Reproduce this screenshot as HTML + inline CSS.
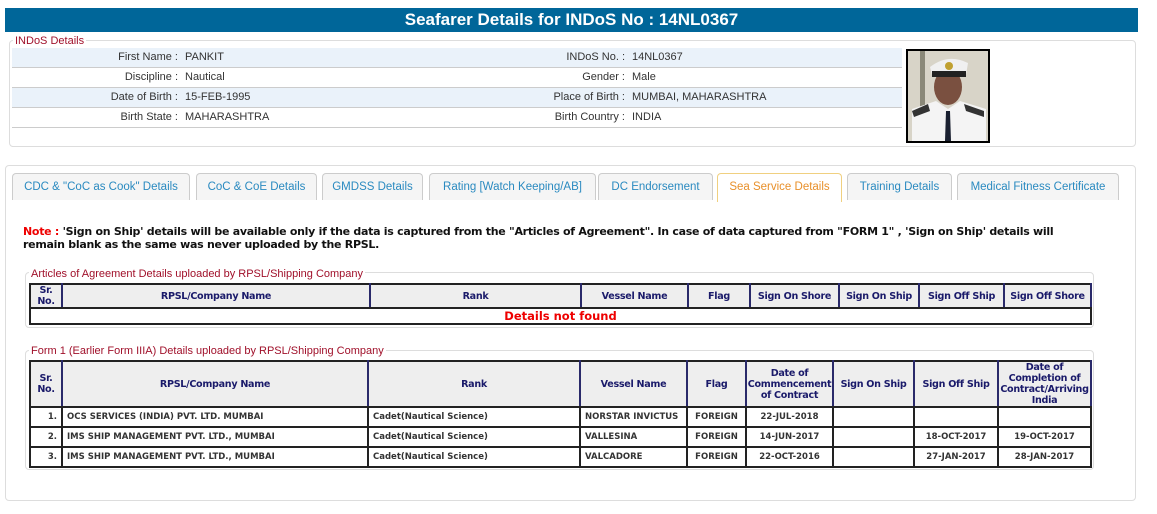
<!DOCTYPE html>
<html><head><meta charset="utf-8"><style>
*{margin:0;padding:0;box-sizing:border-box}
body{width:1157px;height:514px;background:#fff;position:relative;font-family:"Liberation Sans",Arial,sans-serif;overflow:hidden}
.a{position:absolute}
.hdr{left:5px;top:8px;width:1133px;height:24px;background:#006699;color:#fff;font-weight:bold;font-size:17px;text-align:center;line-height:24px}
.fs{border:1px solid #ddd;border-radius:4px}
.leg{background:#fff;color:#a0102a;font-size:11px;padding:0 2px;line-height:12px}
.row{left:12px;width:890px;height:20px;border-bottom:1px solid #ccc;font-size:11px;color:#333;line-height:19px}
.row.b{background:#eaf2fa}
.row span{position:absolute;white-space:nowrap}
.l1{right:724px;text-align:right}
.v1{left:173px}
.l2{right:277px;text-align:right}
.v2{left:620px}
.tab{top:173px;height:27px;border:1px solid #ccc;border-bottom:none;border-radius:4px 4px 0 0;background:#f5f5f5;color:#2a8ac0;font-size:11.5px;text-align:center;line-height:26px;white-space:nowrap}
.tab.on{background:#fff;color:#e8902a;border-color:#f0d080;height:29px}
.note{left:23px;top:225px;width:1060px;font-family:Verdana,"DejaVu Sans",sans-serif;font-weight:bold;font-size:11px;letter-spacing:-0.28px;line-height:13px;color:#111}
table{position:absolute;border-collapse:collapse;font-family:Verdana,"DejaVu Sans",sans-serif;font-weight:bold;table-layout:fixed}
th{background:#eee;color:#1a1a6a;font-size:9.6px;letter-spacing:-0.3px;border:2px solid #222;border-right-color:#2a2a6a;line-height:11px;text-align:center;padding:0;overflow:hidden}
td{font-size:8.5px;color:#333;border:2px solid #222;padding:0 4px;height:20px;white-space:nowrap;overflow:hidden}
td.c{text-align:center}
</style></head><body>
<div class="a hdr">Seafarer Details for INDoS No : 14NL0367</div>

<div class="a fs" style="left:9px;top:40px;width:1127px;height:107px"></div>
<div class="a leg" style="left:13px;top:35px">INDoS Details</div>
<div class="a row b" style="top:48px"><span class="l1">First Name :</span><span class="v1">PANKIT</span><span class="l2">INDoS No. :</span><span class="v2">14NL0367</span></div>
<div class="a row" style="top:68px"><span class="l1">Discipline :</span><span class="v1">Nautical</span><span class="l2">Gender :</span><span class="v2">Male</span></div>
<div class="a row b" style="top:88px"><span class="l1">Date of Birth :</span><span class="v1">15-FEB-1995</span><span class="l2">Place of Birth :</span><span class="v2">MUMBAI, MAHARASHTRA</span></div>
<div class="a row" style="top:108px"><span class="l1">Birth State :</span><span class="v1">MAHARASHTRA</span><span class="l2">Birth Country :</span><span class="v2">INDIA</span></div>
<div class="a" style="left:12px;top:128px;width:1120px;border-bottom:1px solid #ddd;height:19px"></div>
<svg class="a" style="left:906px;top:49px" width="84" height="94" viewBox="0 0 84 94">
<rect width="84" height="94" fill="#000"/>
<rect x="2" y="2" width="80" height="90" fill="#d8d4c8"/>
<rect x="14" y="2" width="5" height="60" fill="#8a8878"/>
<path d="M6 60 L30 52 L42 60 L54 52 L80 60 L80 92 L6 92Z" fill="#f4f4f4"/>
<path d="M6 62 L22 55 L24 62 L8 68Z M58 55 L78 62 L78 68 L60 62Z" fill="#333"/>
<path d="M40 62 L44 62 L45 92 L39 92Z" fill="#1a2030"/>
<ellipse cx="42" cy="38" rx="14" ry="18" fill="#7a5040"/>
<path d="M24 18 Q42 4 62 14 L60 26 L26 26Z" fill="#f0f0f0"/>
<path d="M26 22 L60 22 L60 28 L26 28Z" fill="#222"/>
<circle cx="43" cy="17" r="4" fill="#c0a030"/>
</svg>

<div class="a fs" style="left:5px;top:165px;width:1131px;height:336px"></div>
<div class="a tab" style="left:12px;width:178px">CDC &amp; "CoC as Cook" Details</div>
<div class="a tab" style="left:196px;width:121px">CoC &amp; CoE Details</div>
<div class="a tab" style="left:322px;width:101px">GMDSS Details</div>
<div class="a tab" style="left:429px;width:167px">Rating [Watch Keeping/AB]</div>
<div class="a tab" style="left:598px;width:115px">DC Endorsement</div>
<div class="a tab on" style="left:717px;width:125px">Sea Service Details</div>
<div class="a tab" style="left:847px;width:105px">Training Details</div>
<div class="a tab" style="left:957px;width:162px">Medical Fitness Certificate</div>

<div class="a note"><span style="color:#e00">Note :</span> 'Sign on Ship' details will be available only if the data is captured from the "Articles of Agreement". In case of data captured from "FORM 1" , 'Sign on Ship' details will remain blank as the same was never uploaded by the RPSL.</div>

<div class="a fs" style="left:25px;top:272px;width:1069px;height:56px"></div>
<div class="a leg" style="left:29px;top:268px">Articles of Agreement Details uploaded by RPSL/Shipping Company</div>
<table style="left:29px;top:283px;width:1061px">
<colgroup><col style="width:32px"><col style="width:308px"><col style="width:211px"><col style="width:107px"><col style="width:62px"><col style="width:89px"><col style="width:80px"><col style="width:85px"><col style="width:87px"></colgroup>
<tr style="height:24px"><th>Sr.<br>No.</th><th>RPSL/Company Name</th><th>Rank</th><th>Vessel Name</th><th>Flag</th><th>Sign On Shore</th><th>Sign On Ship</th><th>Sign Off Ship</th><th>Sign Off Shore</th></tr>
<tr><td colspan="9" style="height:16px;text-align:center;color:#e00;font-size:11.5px;line-height:12px">Details not found</td></tr>
</table>

<div class="a fs" style="left:25px;top:350px;width:1069px;height:120px"></div>
<div class="a leg" style="left:29px;top:345px">Form 1 (Earlier Form IIIA) Details uploaded by RPSL/Shipping Company</div>
<table style="left:29px;top:360px;width:1061px">
<colgroup><col style="width:32px"><col style="width:306px"><col style="width:212px"><col style="width:107px"><col style="width:59px"><col style="width:87px"><col style="width:81px"><col style="width:84px"><col style="width:93px"></colgroup>
<tr style="height:46px"><th>Sr.<br>No.</th><th>RPSL/Company Name</th><th>Rank</th><th>Vessel Name</th><th>Flag</th><th>Date of Commencement of Contract</th><th>Sign On Ship</th><th>Sign Off Ship</th><th>Date of Completion of Contract/Arriving India</th></tr>
<tr><td style="text-align:right">1.</td><td>OCS SERVICES (INDIA) PVT. LTD. MUMBAI</td><td>Cadet(Nautical Science)</td><td>NORSTAR INVICTUS</td><td class="c">FOREIGN</td><td class="c">22-JUL-2018</td><td></td><td></td><td></td></tr>
<tr><td style="text-align:right">2.</td><td>IMS SHIP MANAGEMENT PVT. LTD., MUMBAI</td><td>Cadet(Nautical Science)</td><td>VALLESINA</td><td class="c">FOREIGN</td><td class="c">14-JUN-2017</td><td></td><td class="c">18-OCT-2017</td><td class="c">19-OCT-2017</td></tr>
<tr><td style="text-align:right">3.</td><td>IMS SHIP MANAGEMENT PVT. LTD., MUMBAI</td><td>Cadet(Nautical Science)</td><td>VALCADORE</td><td class="c">FOREIGN</td><td class="c">22-OCT-2016</td><td></td><td class="c">27-JAN-2017</td><td class="c">28-JAN-2017</td></tr>
</table>
</body></html>
